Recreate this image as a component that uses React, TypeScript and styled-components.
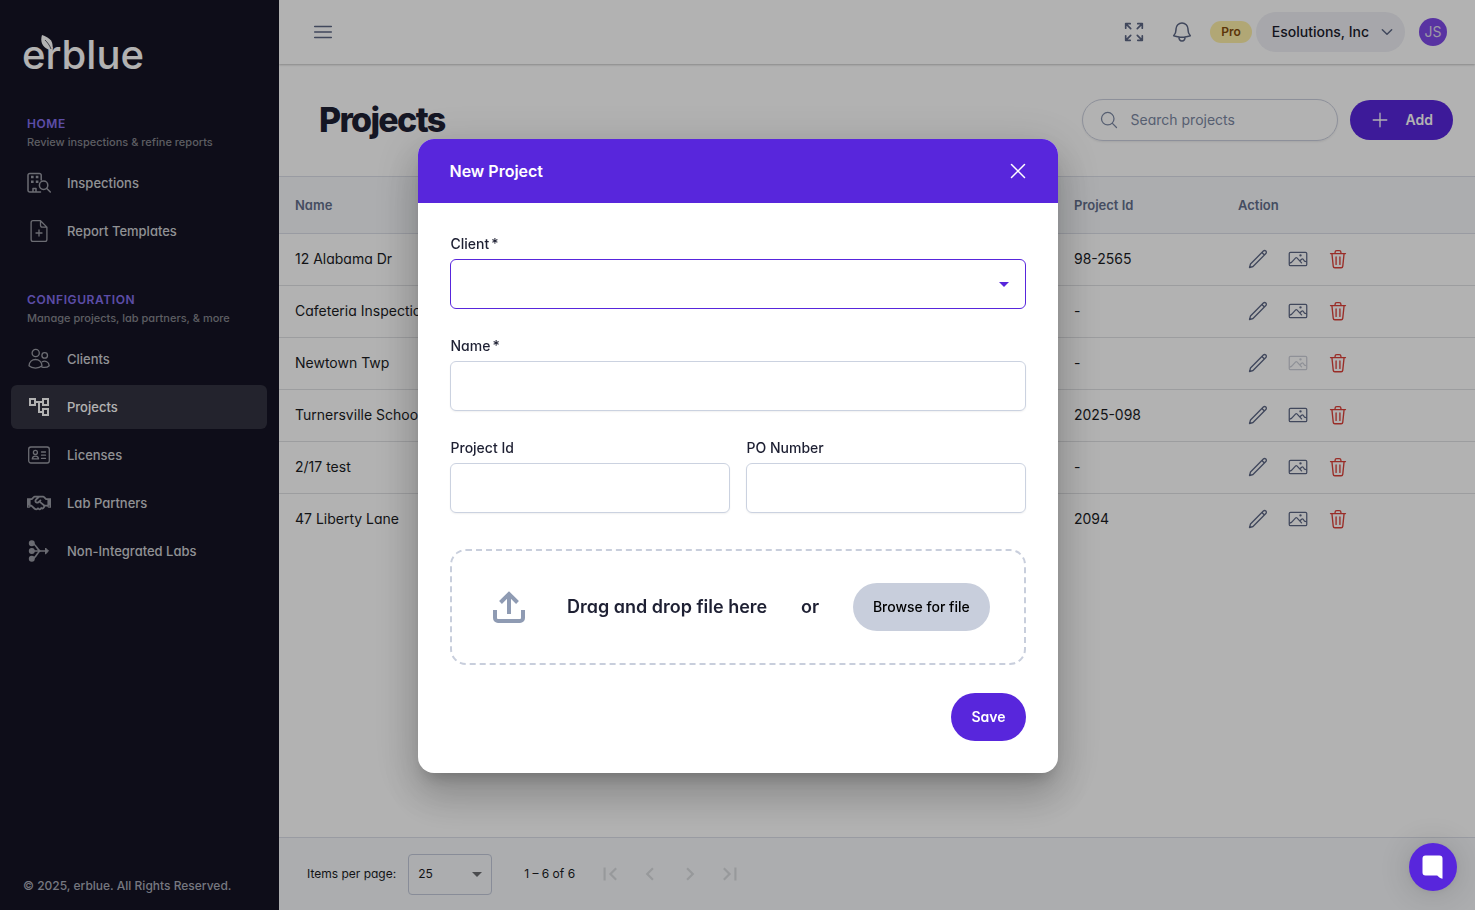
import React from "react";
import styled, { createGlobalStyle } from "styled-components";
import { HiOutlineBell, HiOutlineMagnifyingGlass } from "react-icons/hi2";
import { FaRegHandshake } from "react-icons/fa";
import {
  MdArrowDropDown,
  MdChevronLeft,
  MdChevronRight,
  MdFirstPage,
  MdLastPage,
  MdOutlineAccountTree,
} from "react-icons/md";

const GlobalStyle = createGlobalStyle`
  *, *::before, *::after { box-sizing: border-box; }
  body {
    margin: 0;
    font-family: Inter, "Liberation Sans", sans-serif;
    font-feature-settings: "cv11";
    font-size: 14px;
    line-height: 20px;
    color: #1a1c1f;
    background: #fff;
  }
  button, input, select { font: inherit; font-feature-settings: inherit; color: inherit; letter-spacing: inherit; }
  button { border: 0; padding: 0; background: none; cursor: pointer; }
  h1, h2, p { margin: 0; }
  svg { display: block; flex: none; }
`;

/* ---------- icons ---------- */

const Line = styled.svg.attrs({ viewBox: "0 0 24 24", fill: "none", stroke: "currentColor" })<{ $size?: number; $weight?: number }>`
  width: ${(p) => p.$size ?? 24}px;
  height: ${(p) => p.$size ?? 24}px;
  stroke-width: ${(p) => p.$weight ?? 1.3};
  stroke-linecap: round;
  stroke-linejoin: round;
`;

const BuildingSearchIcon = () => (
  <Line $weight={1.5}>
    <path d="M14.2 9V4.300a1.800 1.800 0 0 0-1.800-1.800H2.800A1.800 1.800 0 0 0 1 4.300v14.900A1.800 1.800 0 0 0 2.800 21h10.700M6 21v-3.500h3V21" />
    <path d="M4 6h2.600M8.800 6h2.600M4 10.800h2.600M8.800 10.800h2.600" strokeWidth="2.600" strokeLinecap="butt" />
    <circle cx="16.600" cy="14.200" r="4.200" />
    <path d="m19.800 17.500 3.500 3.500" />
  </Line>
);
const DocumentAddIcon = () => (
  <Line>
    <path d="M13.500 1.700H6A1.900 1.900 0 0 0 4.100 3.600v16.800A1.900 1.900 0 0 0 6 22.300h12a1.900 1.900 0 0 0 1.900-1.900V8.100zM13.500 1.700v4.500a1.900 1.900 0 0 0 1.900 1.900h4.500M12 11v6M9 14h6" />
  </Line>
);
const ClientsIcon = () => (
  <Line>
    <circle cx="8.700" cy="6" r="3.600" />
    <circle cx="17.700" cy="8.400" r="2.800" />
    <path d="M2 18.800C2.200 15 5 12.500 8.500 12.500s6.300 2.500 6.500 6.300C12 21.800 5 21.800 2 18.800zM15.200 14.800c3-1.600 6.800.2 7 3.900-1.600 1.600-4.600 2-7.300 1.400" />
  </Line>
);
const LicenseIcon = () => (
  <Line>
    <rect x="1.700" y="4" width="20.600" height="16" rx="2.200" />
    <circle cx="8.400" cy="9.400" r="2" />
    <path d="M5.300 15.900c.5-3.600 5.700-3.600 6.200 0zM14.500 9h4M14.500 12.200h4M14.500 15.400h4" />
  </Line>
);
const MergeIcon = () => (
  <Line $weight={1.600}>
    <g fill="currentColor">
      <circle cx="4.800" cy="4.200" r="2.200" />
      <circle cx="4.800" cy="12" r="2.200" />
      <circle cx="4.800" cy="19.800" r="2.200" />
      <path d="m18.800 9.300 2.700 2.700-2.700 2.700z" strokeWidth="1" />
    </g>
    <path d="M5 4.200c4 0 5.500 7.800 8.500 7.800M5 19.800c4 0 5.500-7.800 8.500-7.800M5 12h14" />
  </Line>
);
const MenuIcon = () => (
  <Line $weight={1.500}><path d="M3.700 6.500h16.600M3.700 12h16.600M3.700 17.500h16.600" /></Line>
);
const ExpandIcon = () => (
  <Line $weight={1.700}>
    <path d="M3.700 8.200V3.700h4.500M3.700 3.700l5 5M15.800 3.700h4.500v4.500M20.300 3.700l-5 5M3.700 15.800v4.500h4.500M3.700 20.300l5-5M20.300 15.800v4.500h-4.500M20.300 20.300l-5-5" />
  </Line>
);
const ChevronIcon = () => (
  <Line $size={16} $weight={2.200}><path d="m5 8.500 7 7 7-7" /></Line>
);
const PlusIcon = () => <Line><path d="M12 5.200v13.600M5.200 12h13.600" /></Line>;
const CloseIcon = () => <Line $weight={1.500}><path d="m5.500 5.500 13 13M18.500 5.500l-13 13" /></Line>;
const PencilIcon = () => (
  <Line $size={20} $weight={1.600}>
    <path d="M1.800 22.300 3 18 18.400 2.500a1.900 1.900 0 0 1 3 3L6 21zM16.700 4.300l3 3" />
  </Line>
);
const PictureIcon = () => (
  <Line $size={20} $weight={1.500}>
    <rect x="1.500" y="4" width="21" height="16" rx="1.500" />
    <path d="m2 17 2.200-1 5-5.300c.5-.5 1-.5 1.500 0l5.600 6M14.200 14.200l2.200-1.900c.6-.5 1.200-.5 1.800 0l1.600 2.200 2.300.8" />
    <circle cx="15" cy="7.600" r=".7" />
  </Line>
);
const TrashIcon = () => (
  <Line $size={20} $weight={1.600}>
    <path d="M3 5.500h18M4.700 5.500l1.600 15.300A1.900 1.900 0 0 0 8.200 22.500h7.600a1.900 1.900 0 0 0 1.900-1.700l1.600-15.300M8.500 5.500V4a2 2 0 0 1 2-2h3a2 2 0 0 1 2 2v1.500M9.700 9.500v9M14.300 9.500v9" />
  </Line>
);
const UploadIcon = () => (
  <svg width="48" height="48" viewBox="0 0 48 48" fill="none" stroke="#8f9bb3" strokeWidth="4">
    <path d="M10 27v8a3 3 0 0 0 3 3h22a3 3 0 0 0 3-3v-8M24 31V12M15.500 19.500 24 11l8.500 8.500" />
  </svg>
);
const ChatIcon = () => (
  <svg width="24" height="26" viewBox="0 0 24 26" fill="#fff">
    <path d="M4.500 1.500h14a3 3 0 0 1 3 3v20.200c-2.500-.3-3.800-1.700-5.300-3.200H4.500a3 3 0 0 1-3-3v-14a3 3 0 0 1 3-3z" />
  </svg>
);

/* ---------- sidebar ---------- */

const Shell = styled.div`
  display: flex;
  min-height: 100vh;
`;
const Sidebar = styled.aside`
  width: 279px;
  flex: none;
  display: flex;
  flex-direction: column;
  background: #151424;
  font-size: 13px;
  font-weight: 500;
`;
const Brand = styled.a`
  position: relative;
  align-self: flex-start;
  margin: 31px 0 0 22px;
  font-size: 40px;
  line-height: 48px;
  font-weight: 500;
  color: #fff;
  text-decoration: none;
`;
const Leaf = styled.svg`
  position: absolute;
  left: 18px;
  top: 3px;
`;
const NavSection = styled.nav`
  margin: 35px 12px 0 11px;
  & + & { margin-top: 33px; }
`;
const NavTitle = styled.h2`
  padding-left: 16px;
  font-size: 12px;
  line-height: 20px;
  font-weight: 600;
  letter-spacing: 0.05em;
  color: #856fee;
`;
const NavHint = styled.p`
  padding-left: 16px;
  margin-bottom: 11px;
  font-size: 11px;
  line-height: 16px;
  color: #85868e;
`;
const NavLink = styled.a<{ $active?: boolean }>`
  display: flex;
  align-items: center;
  gap: 16px;
  height: 44px;
  margin-bottom: 4px;
  padding: 0 16px;
  border-radius: 6px;
  text-decoration: none;
  color: ${(p) => (p.$active ? "#fff" : "#cfd0d5")};
  background: ${(p) => (p.$active ? "#333341" : "transparent")};
  svg { color: ${(p) => (p.$active ? "#fff" : "#9a9ba5")}; }
`;
const Copyright = styled.p`
  margin: auto 0 14px 23px;
  font-size: 12px;
  color: #a9abb8;
`;

/* ---------- main area ---------- */

const Main = styled.main`
  flex: 1;
  min-width: 0;
  display: flex;
  flex-direction: column;
`;
const TopBar = styled.header`
  display: flex;
  align-items: center;
  height: 64px;
  padding: 0 28px 0 32px;
  color: #64748b;
  box-shadow: 0 1px 2px rgba(0, 0, 0, 0.24);
`;
const TopActions = styled.div`
  display: flex;
  align-items: center;
  margin-left: auto;
  svg { color: #5d6785; }
`;
const IconButton = styled.button<{ $box?: number; $tone?: string }>`
  display: grid;
  place-items: center;
  width: ${(p) => p.$box ?? 24}px;
  height: ${(p) => p.$box ?? 24}px;
  color: ${(p) => p.$tone ?? "#5d6785"};
`;
const Plan = styled.span`
  margin: 0 4px;
  padding: 0 11px;
  border-radius: 11px;
  font-size: 12px;
  line-height: 22px;
  font-weight: 600;
  color: #854d0e;
  background: #fef0a8;
`;
const OrgButton = styled.button`
  display: flex;
  align-items: center;
  gap: 10px;
  height: 40px;
  padding: 0 10px 0 16px;
  border-radius: 20px;
  font-weight: 500;
  color: #1a1c2b;
  background: #eff0f5;
`;
const Avatar = styled.button`
  width: 28px;
  height: 28px;
  margin-left: 14px;
  border-radius: 50%;
  color: #e0dcec;
  background: #7f4ae8;
`;
const TitleBar = styled.section`
  display: flex;
  align-items: center;
  height: 112px;
  padding: 0 22px 0 40px;
`;
const Title = styled.h1`
  margin-right: auto;
  font-size: 34px;
  line-height: 40px;
  font-weight: 800;
  letter-spacing: -0.05em;
  color: #1e2033;
`;
const SearchBox = styled.label`
  display: flex;
  align-items: center;
  gap: 12px;
  width: 256px;
  height: 42px;
  margin-right: 12px;
  padding: 0 16px;
  border: 1px solid #cbcfdd;
  border-radius: 21px;
  box-shadow: 0 1px 2px rgba(0, 0, 0, 0.08);
  color: #7c88a3;
  input {
    flex: 1;
    min-width: 0;
    border: 0;
    padding: 0;
    outline: 0;
    background: none;
  }
  input::placeholder { color: #7c88a3; opacity: 1; }
`;
const Pill = styled.button<{ $tone?: "soft"; $tall?: boolean }>`
  display: flex;
  align-items: center;
  gap: 14px;
  height: ${(p) => (p.$tall ? 48 : 40)}px;
  padding: 0 20px;
  border-radius: 24px;
  font-weight: ${(p) => (p.$tone ? 500 : 600)};
  color: ${(p) => (p.$tone ? "#000" : "#fff")};
  background: ${(p) => (p.$tone ? "#c8cedc" : "#5826dc")};
`;
const AddPill = styled(Pill)`padding-left: 18px;`;

const Table = styled.table`
  width: 100%;
  table-layout: fixed;
  border-collapse: separate;
  border-spacing: 0;
  text-align: left;
  th, td { padding: 0 16px; }
  th {
    height: 58px;
    border: solid #dcdfe8;
    border-width: 1px 0;
    font-size: 13px;
    font-weight: 600;
    color: #646f8c;
    background: #f6f8fb;
  }
  td { height: 52px; padding-bottom: 2px; border-bottom: 1px solid #e0e1e4; }
  tr:last-child td { border-bottom: 0; }
`;
const IdCol = styled.col`width: 164px;`;
const ActionCol = styled.col`width: 253px;`;
const RowActions = styled.div`display: flex;`;

const Pager = styled.footer`
  display: flex;
  align-items: center;
  height: 73px;
  margin-top: auto;
  padding: 0 28px;
  border-top: 1px solid #dcdfe8;
  background: #f6f8fb;
  font-size: 12px;
  label { margin-right: 12px; }
  output { margin: 0 15px 0 32px; }
`;
const SelectBox = styled.div<{ $small?: boolean }>`
  display: grid;
  align-items: center;
  justify-items: end;
  width: ${(p) => (p.$small ? "84px" : "100%")};
  select, svg { grid-area: 1 / 1; }
  select {
    appearance: none;
    width: 100%;
    height: ${(p) => (p.$small ? 41 : 50)}px;
    padding: 0 9px;
    border: 1px solid ${(p) => (p.$small ? "#c3c9da" : "#5826dc")};
    border-radius: ${(p) => (p.$small ? 4 : 6)}px;
    background: transparent;
    outline: 0;
  }
  svg {
    margin-right: ${(p) => (p.$small ? 3 : 10)}px;
    color: ${(p) => (p.$small ? "#6b6c70" : "#5826dc")};
    pointer-events: none;
  }
`;

/* ---------- dialog ---------- */

const Backdrop = styled.div`
  position: fixed;
  inset: 0;
  display: grid;
  place-items: center;
  padding-top: 2px;
  background: rgba(0, 0, 0, 0.3);
`;
const Dialog = styled.form`
  width: 640px;
  max-width: 90vw;
  border-radius: 16px;
  overflow: hidden;
  background: #fff;
  box-shadow: 0 11px 15px -7px rgba(0, 0, 0, 0.2), 0 24px 38px 3px rgba(0, 0, 0, 0.14), 0 9px 46px 8px rgba(0, 0, 0, 0.12);
`;
const DialogHead = styled.header`
  display: flex;
  align-items: center;
  justify-content: space-between;
  height: 64px;
  padding: 0 28px 0 32px;
  color: #fff;
  background: #5826dc;
`;
const DialogTitle = styled.h2`
  font-size: 16px;
  line-height: 24px;
  font-weight: 600;
`;
const DialogBody = styled.div`
  display: grid;
  grid-template-columns: 1fr 1fr;
  gap: 28px 16px;
  padding: 32px;
`;
const Field = styled.div<{ $half?: boolean }>`
  grid-column: ${(p) => (p.$half ? "auto" : "1 / -1")};
  display: grid;
  gap: 6px;
  label {
    padding-left: 1px;
    line-height: 18px;
    font-weight: 500;
    color: #1e2033;
  }
`;
const Required = styled.span`margin-left: 2px;`;
const TextInput = styled.input`
  width: 100%;
  height: 50px;
  padding: 0 16px;
  border: 1px solid #cbd2e0;
  border-radius: 6px;
  box-shadow: 0 1px 2px rgba(0, 0, 0, 0.06);
  outline: 0;
`;
const DropZone = styled.div`
  grid-column: 1 / -1;
  display: flex;
  align-items: center;
  justify-content: space-evenly;
  height: 116px;
  margin-top: 8px;
  border: 2px dashed #c8cedc;
  border-radius: 16px;
  font-size: 18px;
  line-height: 24px;
  font-weight: 600;
  color: #1e2033;
`;
const BrowsePill = styled(Pill)`font-size: 14px;`;
const DialogFoot = styled.div`
  grid-column: 1 / -1;
  display: flex;
  justify-content: flex-end;
`;
const ChatButton = styled.button`
  position: fixed;
  right: 18px;
  bottom: 19px;
  display: grid;
  place-items: center;
  width: 48px;
  height: 48px;
  border-radius: 50%;
  background: #5826dc;
  box-shadow: 0 1px 6px rgba(0, 0, 0, 0.06), 0 2px 32px rgba(0, 0, 0, 0.16);
`;

const configuration = [
  { label: "Clients", icon: <ClientsIcon /> },
  { label: "Projects", icon: <MdOutlineAccountTree size={24} />, active: true },
  { label: "Licenses", icon: <LicenseIcon /> },
  { label: "Lab Partners", icon: <FaRegHandshake size={24} /> },
  { label: "Non-Integrated Labs", icon: <MergeIcon /> },
];

const projects = [
  { name: "12 Alabama Dr", id: "98-2565", image: true },
  { name: "Cafeteria Inspection", id: "-", image: true },
  { name: "Newtown Twp", id: "-", image: false },
  { name: "Turnersville School", id: "2025-098", image: true },
  { name: "2/17 test", id: "-", image: true },
  { name: "47 Liberty Lane", id: "2094", image: true },
];

export default function App() {
  return (
    <>
      <GlobalStyle />
      <Shell>
        <Sidebar>
          <Brand href="#">
            erblue
            <Leaf width="14" height="18" viewBox="0 0 14 18">
              <path d="M2 1c6.500 2.500 12 5 10.400 14.800C5 16-.8 10 2 1z" fill="#fff" />
              <path d="M5 6c2.500 2.500 4.500 5 6 9" fill="none" stroke="#151424" strokeWidth=".7" />
            </Leaf>
          </Brand>
          <NavSection>
            <NavTitle>HOME</NavTitle>
            <NavHint>Review inspections &amp; refine reports</NavHint>
            <NavLink href="#"><BuildingSearchIcon />Inspections</NavLink>
            <NavLink href="#"><DocumentAddIcon />Report Templates</NavLink>
          </NavSection>
          <NavSection>
            <NavTitle>CONFIGURATION</NavTitle>
            <NavHint>Manage projects, lab partners, &amp; more</NavHint>
            {configuration.map((item) => (
              <NavLink key={item.label} href="#" $active={item.active}>{item.icon}{item.label}</NavLink>
            ))}
          </NavSection>
          <Copyright>© 2025, erblue. All Rights Reserved.</Copyright>
        </Sidebar>

        <Main>
          <TopBar>
            <IconButton aria-label="Toggle navigation"><MenuIcon /></IconButton>
            <TopActions>
              <IconButton aria-label="Full screen" $box={48}><ExpandIcon /></IconButton>
              <IconButton aria-label="Notifications" $box={48}><HiOutlineBell size={24} /></IconButton>
              <Plan>Pro</Plan>
              <OrgButton>Esolutions, Inc<ChevronIcon /></OrgButton>
              <Avatar>JS</Avatar>
            </TopActions>
          </TopBar>

          <TitleBar>
            <Title>Projects</Title>
            <SearchBox>
              <HiOutlineMagnifyingGlass size={20} />
              <input type="search" placeholder="Search projects" aria-label="Search projects" />
            </SearchBox>
            <AddPill><PlusIcon />Add</AddPill>
          </TitleBar>

          <Table>
            <colgroup><col /><IdCol /><ActionCol /></colgroup>
            <thead>
              <tr><th>Name</th><th>Project Id</th><th>Action</th></tr>
            </thead>
            <tbody>
              {projects.map((project) => (
                <tr key={project.name}>
                  <td>{project.name}</td>
                  <td>{project.id}</td>
                  <td>
                    <RowActions>
                      <IconButton aria-label="Edit" $box={40}><PencilIcon /></IconButton>
                      <IconButton aria-label="Image" $box={40} disabled={!project.image} $tone={project.image ? undefined : "#cdd0d9"}>
                        <PictureIcon />
                      </IconButton>
                      <IconButton aria-label="Delete" $box={40} $tone="#dc4038"><TrashIcon /></IconButton>
                    </RowActions>
                  </td>
                </tr>
              ))}
            </tbody>
          </Table>

          <Pager>
            <label htmlFor="page-size">Items per page:</label>
            <SelectBox $small>
              <select id="page-size" defaultValue="25"><option>25</option><option>50</option></select>
              <MdArrowDropDown size={24} />
            </SelectBox>
            <output>1 – 6 of 6</output>
            <IconButton aria-label="First page" disabled $box={40} $tone="#d9dbde"><MdFirstPage size={26} /></IconButton>
            <IconButton aria-label="Previous page" disabled $box={40} $tone="#d9dbde"><MdChevronLeft size={26} /></IconButton>
            <IconButton aria-label="Next page" disabled $box={40} $tone="#d9dbde"><MdChevronRight size={26} /></IconButton>
            <IconButton aria-label="Last page" disabled $box={40} $tone="#d9dbde"><MdLastPage size={26} /></IconButton>
          </Pager>
        </Main>
      </Shell>

      <Backdrop>
        <Dialog role="dialog" aria-labelledby="dialog-title">
          <DialogHead>
            <DialogTitle id="dialog-title">New Project</DialogTitle>
            <IconButton type="button" aria-label="Close" $tone="#fff"><CloseIcon /></IconButton>
          </DialogHead>
          <DialogBody>
            <Field>
              <label htmlFor="client">Client<Required>*</Required></label>
              <SelectBox>
                <select id="client" />
                <MdArrowDropDown size={24} />
              </SelectBox>
            </Field>
            <Field>
              <label htmlFor="name">Name<Required>*</Required></label>
              <TextInput id="name" />
            </Field>
            <Field $half>
              <label htmlFor="project-id">Project Id</label>
              <TextInput id="project-id" />
            </Field>
            <Field $half>
              <label htmlFor="po-number">PO Number</label>
              <TextInput id="po-number" />
            </Field>
            <DropZone>
              <UploadIcon />
              <span>Drag and drop file here</span>
              <span>or</span>
              <BrowsePill type="button" $tone="soft" $tall>Browse for file</BrowsePill>
            </DropZone>
            <DialogFoot>
              <Pill type="submit" $tall>Save</Pill>
            </DialogFoot>
          </DialogBody>
        </Dialog>
      </Backdrop>
      <ChatButton aria-label="Open chat"><ChatIcon /></ChatButton>
    </>
  );
}
